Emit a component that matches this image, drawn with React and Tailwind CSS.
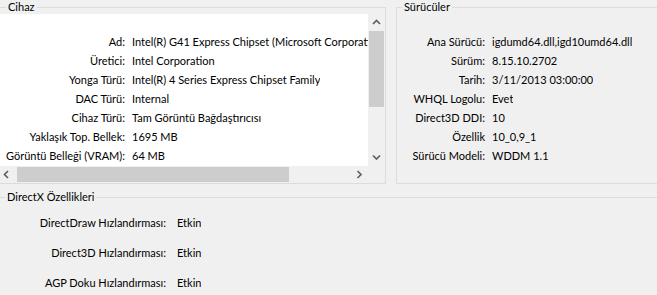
import React from 'react';

const deviceRows = [
  ['Ad:', 'Intel(R) G41 Express Chipset (Microsoft Corporation - WDDM 1.1)'],
  ['Üretici:', 'Intel Corporation'],
  ['Yonga Türü:', 'Intel(R) 4 Series Express Chipset Family'],
  ['DAC Türü:', 'Internal'],
  ['Cihaz Türü:', 'Tam Görüntü Bağdaştırıcısı'],
  ['Yaklaşık Top. Bellek:', '1695 MB'],
  ['Görüntü Belleği (VRAM):', '64 MB'],
];

const driverRows = [
  ['Ana Sürücü:', 'igdumd64.dll,igd10umd64.dll'],
  ['Sürüm:', '8.15.10.2702'],
  ['Tarih:', '3/11/2013 03:00:00'],
  ['WHQL Logolu:', 'Evet'],
  ['Direct3D DDI:', '10'],
  ['Özellik', '10_0,9_1'],
  ['Sürücü Modeli:', 'WDDM 1.1'],
];

const featureRows = [
  ['DirectDraw Hızlandırması:', 'Etkin'],
  ['Direct3D Hızlandırması:', 'Etkin'],
  ['AGP Doku Hızlandırması:', 'Etkin'],
];

function Chevron({ dir }) {
  const points = {
    up: '1,5 4.5,1.5 8,5',
    down: '1,1.5 4.5,5 8,1.5',
    left: '5,1 1.5,4.5 5,8',
    right: '1.5,1 5,4.5 1.5,8',
  }[dir];
  const vertical = dir === 'up' || dir === 'down';
  return (
    <svg width={vertical ? 9 : 7} height={vertical ? 7 : 9} viewBox={vertical ? '0 0 9 7' : '0 0 7 9'}>
      <polyline points={points} fill="none" stroke="#606060" strokeWidth="1.7" />
    </svg>
  );
}

function GroupBox({ title, className, legendClass, children }) {
  return (
    <fieldset className={`min-w-0 border border-[#dcdcdc] ${className}`}>
      <legend className={`px-[2px] leading-[14px] ${legendClass}`}>{title}</legend>
      {children}
    </fieldset>
  );
}

function InfoRow({ label, value, labelWidth, gap, height }) {
  return (
    <div className={`flex items-center whitespace-nowrap ${height}`}>
      <span className={`shrink-0 text-right ${labelWidth}`}>{label}</span>
      <span className={`min-w-0 overflow-hidden ${gap}`}>{value}</span>
    </div>
  );
}

export default function App() {
  return (
    <div className="w-[657px] h-[295px] overflow-hidden bg-[#f0f0f0] text-black text-[11px] font-['Lato',sans-serif]">
      <div className="flex">
        <GroupBox title="Cihaz" className="-ml-[3px] w-[389px] h-[184px] shrink-0" legendClass="ml-[8px]">
          <div className="grid grid-cols-[1fr_17px] grid-rows-[1fr_17px] h-[169px]">
            <div className="bg-white overflow-hidden min-w-0 pt-[19px]">
              {deviceRows.map(([label, value]) => (
                <InfoRow key={label} label={label} value={value} labelWidth="w-[127px]" gap="ml-[7px]" height="h-[19px]" />
              ))}
            </div>
            <div className="flex flex-col">
              <div className="h-[17px] flex items-center justify-center"><Chevron dir="up" /></div>
              <div className="h-[76px] ml-[1px] mr-[1px] bg-[#cdcdcd]" />
              <div className="flex-1" />
              <div className="h-[17px] flex items-center justify-center"><Chevron dir="down" /></div>
            </div>
            <div className="flex">
              <div className="w-[17px] flex items-center justify-center"><Chevron dir="left" /></div>
              <div className="ml-[2px] w-[272px] my-[1px] bg-[#cdcdcd]" />
              <div className="flex-1" />
              <div className="w-[17px] flex items-center justify-center"><Chevron dir="right" /></div>
            </div>
            <div />
          </div>
        </GroupBox>
        <GroupBox title="Sürücüler" className="ml-[10px] w-[280px] h-[184px] shrink-0" legendClass="ml-[5px]">
          <div className="pt-[19px]">
            {driverRows.map(([label, value]) => (
              <InfoRow key={label} label={label} value={value} labelWidth="w-[88px]" gap="ml-[7px]" height="h-[19px]" />
            ))}
          </div>
        </GroupBox>
      </div>
      <GroupBox title="DirectX Özellikleri" className="mt-[6px] -ml-[3px] w-[670px] h-[120px]" legendClass="ml-[7px]">
        <div className="pt-[4px]">
          {featureRows.map(([label, value]) => (
            <InfoRow key={label} label={label} value={value} labelWidth="w-[168px]" gap="ml-[11px]" height="h-[30px]" />
          ))}
        </div>
      </GroupBox>
    </div>
  );
}
